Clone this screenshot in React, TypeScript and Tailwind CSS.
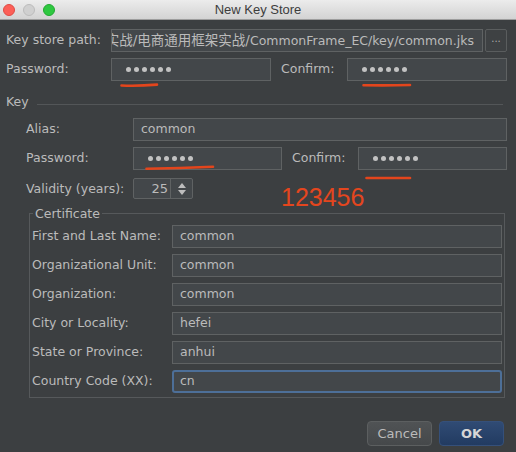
import React from "react";
import clsx from "clsx";

function Dots() {
  return (
    <div className="flex items-center gap-[3px] pl-[7px]">
      {[0, 1, 2, 3, 4, 5].map((i) => (
        <span key={i} className="w-[5px] h-[5px] rounded-full bg-[#c2c2c2]" />
      ))}
    </div>
  );
}

function Field({
  children,
  className,
  focused,
}: {
  children?: React.ReactNode;
  className?: string;
  focused?: boolean;
}) {
  return (
    <div
      className={clsx(
        "relative h-[23px] flex items-center bg-[#43474a]",
        focused
          ? "border-2 border-[#4d6f98] rounded-[3px] pl-[6px]"
          : "border border-[#5f6263] pl-[7px]",
        className
      )}
    >
      {children}
    </div>
  );
}

// hand drawn red strokes from the screenshot
function Mark({
  className,
  w,
  d,
}: {
  className: string;
  w: number;
  d: string;
}) {
  return (
    <svg
      className={clsx("absolute pointer-events-none", className)}
      width={w}
      height={6}
      viewBox={`0 0 ${w} 6`}
    >
      <path d={d} stroke="#e3451c" strokeWidth="2.6" strokeLinecap="round" fill="none" />
    </svg>
  );
}

const certRows = [
  { label: "First and Last Name:", value: "common" },
  { label: "Organizational Unit:", value: "common" },
  { label: "Organization:", value: "common" },
  { label: "City or Locality:", value: "hefei" },
  { label: "State or Province:", value: "anhui" },
  { label: "Country Code (XX):", value: "cn", focused: true },
];

export default function App() {
  return (
    <div className="w-[516px] h-[452px] overflow-hidden bg-[#3c3f41] text-[#bbbbbb] text-[12.5px] font-['DejaVu_Sans','Noto_Sans_CJK_SC',sans-serif] flex flex-col">
      {/* title bar */}
      <div className="h-[20px] shrink-0 grid grid-cols-[1fr_auto_1fr] items-center bg-linear-to-b from-[#ececec] to-[#d3d3d3] border-b border-[#9d9d9d]">
        <div className="flex items-center gap-[8px] pl-[3px]">
          <span className="w-[12px] h-[12px] rounded-full bg-[#fc5f57] border border-[#df4a43]" />
          <span className="w-[12px] h-[12px] rounded-full bg-[#d0d0d0] border border-[#bcbcbc]" />
          <span className="w-[12px] h-[12px] rounded-full bg-[#2ec840] border border-[#22a831]" />
        </div>
        <div className="text-[13px] text-[#3d3d3d] font-['Liberation_Sans',sans-serif] leading-none">
          New Key Store
        </div>
        <div />
      </div>

      <div className="flex flex-col pl-[6px] pr-[9px] pt-[9px]">
        {/* key store path */}
        <div className="flex items-center h-[23px]">
          <span className="w-[105px] shrink-0">Key store path:</span>
          <Field className="flex-1 min-w-0 overflow-hidden justify-end pr-[8px]">
            <span className="whitespace-nowrap">
              <span className="text-[13.5px]">实战/电商通用框架实战/</span>CommonFrame_EC/key/common.jks
            </span>
          </Field>
          <button className="ml-[2px] w-[22px] h-[23px] border border-[#5a5d5e] rounded-[2px] bg-[#3e4143] text-[10px] leading-none text-[#aaaaaa] pb-[3px]">
            ...
          </button>
        </div>

        {/* store password */}
        <div className="flex items-center h-[23px] mt-[6px]">
          <span className="w-[105px] shrink-0">Password:</span>
          <Field className="w-[160px]">
            <Dots />
            <Mark className="left-[8px] top-[23px]" w={39} d="M1.5 3.5 Q18 4.2 37 2.6" />
          </Field>
          <span className="w-[66px] ml-[10px] shrink-0">Confirm:</span>
          <Field className="flex-1">
            <Dots />
            <Mark className="left-[14px] top-[23px]" w={50} d="M1.5 3.2 Q25 3.6 48 3" />
          </Field>
        </div>

        {/* key separator */}
        <div className="flex items-center h-[16px] mt-[13px]">
          <span>Key</span>
          <div className="flex-1 h-px bg-[#535658] ml-[8px] mr-[4px] translate-y-[2px]" />
        </div>

        <div className="flex flex-col pl-[20px]">
          <div className="flex items-center h-[23px] mt-[8px]">
            <span className="w-[107px] shrink-0">Alias:</span>
            <Field className="flex-1">common</Field>
          </div>

          <div className="flex items-center h-[23px] mt-[6px]">
            <span className="w-[107px] shrink-0">Password:</span>
            <Field className="w-[149px]">
              <Dots />
              <Mark className="left-[11px] top-[17px]" w={70} d="M1.5 3.8 Q35 3.4 68 1.8" />
            </Field>
            <span className="w-[66px] ml-[10px] shrink-0">Confirm:</span>
            <Field className="flex-1">
              <Dots />
              <Mark className="left-[6px] top-[27px]" w={47} d="M1.5 3 L45 3" />
            </Field>
          </div>

          <div className="flex items-start h-[21px] mt-[8px]">
            <span className="w-[107px] shrink-0 leading-[21px]">Validity (years):</span>
            <div className="w-[60px] h-[21px] flex border border-[#5f6263] rounded-[2px] bg-[#43474a]">
              <div className="flex-1 text-right pr-[2px] leading-[19px] text-[13px]">25</div>
              <div className="w-[22px] border-l border-[#5f6263] flex flex-col items-center justify-center gap-[2px]">
                <svg width="8" height="5" viewBox="0 0 8 5">
                  <path d="M4 0 L8 5 L0 5 Z" fill="#bdbdbd" />
                </svg>
                <svg width="8" height="5" viewBox="0 0 8 5">
                  <path d="M0 0 L8 0 L4 5 Z" fill="#bdbdbd" />
                </svg>
              </div>
            </div>
            <span className="relative top-[9px] ml-[88px] text-[25px] leading-[20px] text-[#e4461e] font-['Liberation_Sans',sans-serif]">
              123456
            </span>
          </div>

          {/* certificate */}
          <fieldset className="mt-[7px] ml-[3px] mr-[2px] border border-[#56595b] pl-[2px] pr-[2px] pb-[4px]">
            <legend className="ml-[1px] px-[2px] leading-[15px]">Certificate</legend>
            <div className="flex flex-col gap-[6px] pt-[4px]">
              {certRows.map((r) => (
                <div key={r.label} className="flex items-center h-[23px]">
                  <span className="w-[140px] shrink-0 whitespace-nowrap">{r.label}</span>
                  <Field className="flex-1" focused={r.focused}>
                    {r.value}
                  </Field>
                </div>
              ))}
            </div>
          </fieldset>
        </div>

        {/* buttons */}
        <div className="flex justify-end gap-[7px] mt-[23px] pr-[3px]">
          <button className="w-[65px] h-[25px] rounded-[4px] border border-[#5c5f60] bg-linear-to-b from-[#505355] to-[#45484a] text-[13px] text-[#bbbbbb]">
            Cancel
          </button>
          <button className="w-[65px] h-[25px] rounded-[4px] border border-[#35507a] bg-linear-to-b from-[#304b74] to-[#223b61] text-[13px] text-[#d6d6d6] font-semibold">
            OK
          </button>
        </div>
      </div>
    </div>
  );
}
